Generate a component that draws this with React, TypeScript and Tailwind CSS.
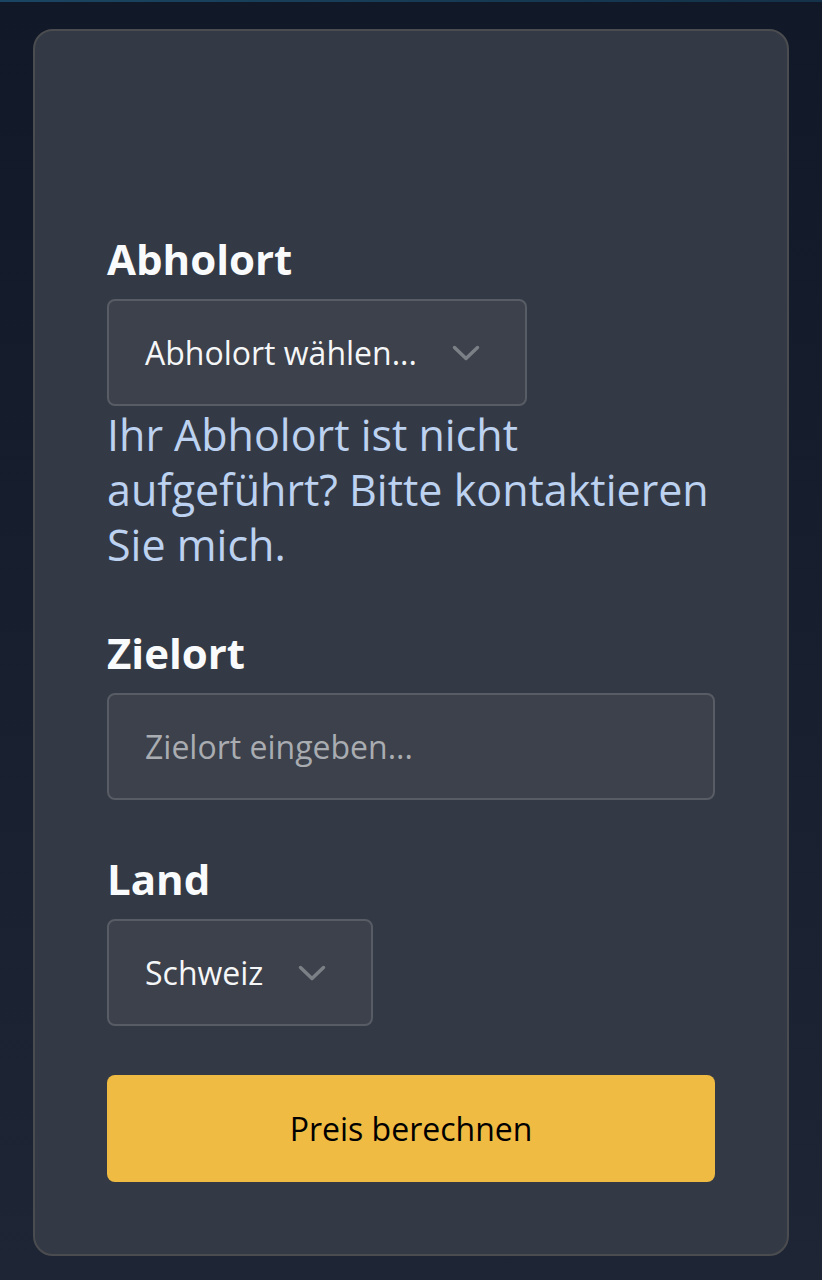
import { useState } from "react";

const FONT = { fontFamily: '"Open Sans", "Noto Sans", sans-serif' };

function Chevron() {
  return (
    <svg width="28" height="16" viewBox="0 0 28 16" fill="none" className="shrink-0">
      <path d="M2.5 2.5 L14 13.5 L25.5 2.5" stroke="#7b7f86" strokeWidth={3.5} strokeLinecap="round" strokeLinejoin="round" />
    </svg>
  );
}

function Label({ children }: { children: string }) {
  return <div className="mb-[12px] text-[42px] font-bold leading-[56px] text-[#f9fafb]">{children}</div>;
}

function SelectBox({ value }: { value: string }) {
  return (
    <button className="inline-flex h-[107px] items-center gap-[35px] rounded-[8px] border-2 border-[#585c64] bg-[#3c414b] pl-[36px] pr-[45px] text-[32px] leading-[48px] text-[#f5f6f7]">
      <span>{value}</span>
      <Chevron />
    </button>
  );
}

export default function App() {
  const [dest, setDest] = useState("");

  return (
    <div className="min-h-[1280px] bg-gradient-to-b from-[#111827] to-[#1e2535]" style={FONT}>
      <div className="h-[2px] bg-gradient-to-r from-[#1a4562] to-[#143249]" />
      <div className="px-[33px] pt-[27px] pb-[24px]">
        <div className="rounded-[20px] border-2 border-[#4a4c4f] bg-[#343a45] px-[72px] pt-[200px] pb-[72px]">
          <Label>Abholort</Label>
          <SelectBox value="Abholort wählen..." />
          <p className="mt-[1px] text-[43px] leading-[55px] text-[#bcd2f0]">
            Ihr Abholort ist nicht aufgeführt? Bitte kontaktieren Sie mich.
          </p>

          <div className="mt-[53px]">
            <Label>Zielort</Label>
            <input
              value={dest}
              onChange={(e) => setDest(e.target.value)}
              placeholder="Zielort eingeben..."
              className="block h-[107px] w-full rounded-[8px] border-2 border-[#585c64] bg-[#3c414b] px-[36px] text-[32px] text-[#f5f6f7] outline-none placeholder:text-[#a9acb1]"
            />
          </div>

          <div className="mt-[51px]">
            <Label>Land</Label>
            <SelectBox value="Schweiz" />
          </div>

          <button className="mt-[49px] flex h-[107px] w-full items-center justify-center rounded-[8px] bg-[#f0bb42] text-[32px] text-black">
            Preis berechnen
          </button>
        </div>
      </div>
    </div>
  );
}
